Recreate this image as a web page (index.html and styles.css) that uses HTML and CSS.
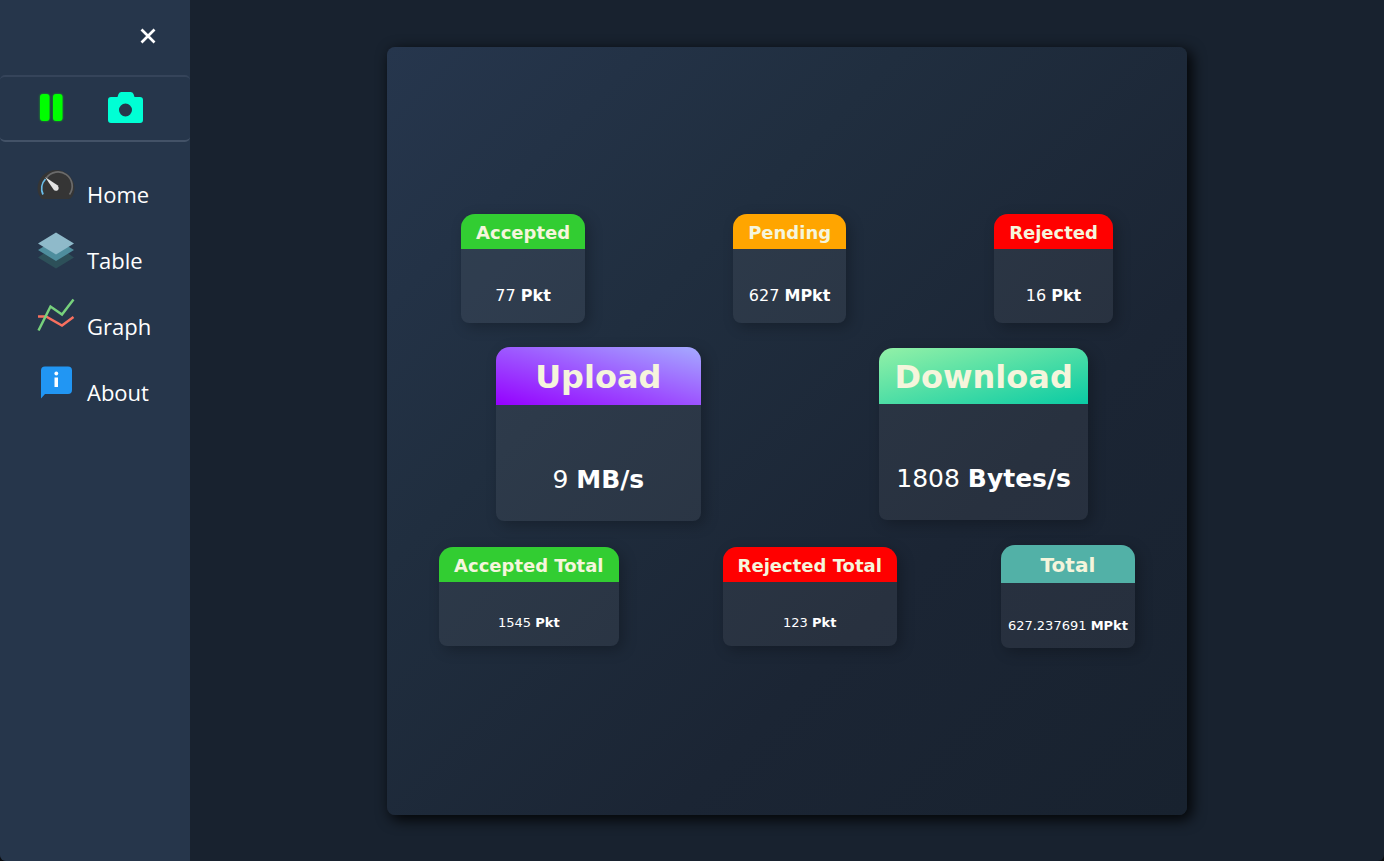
FILE: index.html
```html
<!DOCTYPE html>
<html lang="en">
<head>
<meta charset="utf-8">
<title>Packet Monitor</title>
<link rel="stylesheet" href="styles.css">
</head>
<body>
<div class="app">
  <aside class="sidebar">
    <div class="sidebar-top">
      <button class="close" type="button" aria-label="Close menu">
        <svg width="16" height="16" viewBox="0 0 16 16"><path d="M1.500 1.500 14.500 14.500M14.500 1.500 1.500 14.500" stroke="#fff" stroke-width="2.700"/></svg>
      </button>
    </div>
    <div class="tools">
      <button class="tool" type="button" aria-label="Pause">
        <svg class="glow" width="26" height="30" viewBox="0 0 26 30"><rect x="1" y="1" width="9.500" height="27" rx="3"/><rect x="14" y="1" width="9.500" height="27" rx="3"/></svg>
      </button>
      <button class="tool" type="button" aria-label="Take snapshot">
        <svg width="36" height="32" viewBox="0 0 36 32"><path fill="#00ffd5" fill-rule="evenodd" d="M3 5H9.500L10.500 2Q11.300 0 13.500 0H22.500Q24.700 0 25.500 2L26.500 5H32Q35 5 35 8V28Q35 31 32 31H3Q0 31 0 28V8Q0 5 3 5ZM17.500 11.500A6.500 6.500 0 1 0 17.500 24.500 6.500 6.500 0 0 0 17.500 11.500Z"/></svg>
      </button>
    </div>
    <nav class="nav">
      <a href="#home">
        <svg width="38" height="38" viewBox="0 -3 38 38"><path fill="#353535" d="M5 31C2 28 .5 24.500.5 20.500A18.500 18.500 0 0 1 37.500 20.500C37.500 24.500 36 28 34 30Q33 31 31 31Z"/><path d="M9.500 9.800A14 14 0 0 1 32.500 26.500" fill="none" stroke="#6b6b6b" stroke-width="1.700"/><path d="M8.500 11A14 14 0 0 0 6 26.500" fill="none" stroke="#69bce8" stroke-width="1.800"/><path fill="#e4e4e4" d="M8 9 20.500 17.300Q22.700 20.500 20.800 22.200 18 23.500 16.500 21.500Z"/></svg>
        <span>Home</span>
      </a>
      <a href="#table">
        <svg width="38" height="38" viewBox="0 0 38 38"><path fill="#2d5059" d="M19 14 37 26.500 19 37.500 1 26.500Z"/><path fill="#4e8d9d" d="M19 8 37 19 19 30 1 19Z"/><path fill="#8fbaca" d="M19 1.500 37 12.500 19 23.500 1 12.500Z"/></svg>
        <span>Table</span>
      </a>
      <a href="#graph">
        <svg width="38" height="38" viewBox="0 0 38 38" fill="none" stroke-width="2.500"><path stroke="#f8705f" d="M1 19.500H9L25 28.500 36.500 20"/><path stroke="#77d17c" d="M1.500 33.500 13.500 9.500 25 17.500 36.500 2.500"/></svg>
        <span>Graph</span>
      </a>
      <a href="#about">
        <svg width="38" height="38" viewBox="0 0 38 38"><path fill="#2196f3" d="M8 3.500H31Q35 3.500 35 7.500V27Q35 31 31 31H8L4 35.500V7.500Q4 3.500 8 3.500Z"/><path fill="#fff" d="M17.500 14.500H21V24H17.500Z"/><circle fill="#fff" cx="19.300" cy="10.500" r="1.900"/></svg>
        <span>About</span>
      </a>
    </nav>
  </aside>
  <main class="main">
    <section class="panel">
      <div class="row">
        <article class="card accepted"><h2>Accepted</h2><p>77 <b>Pkt</b></p></article>
        <article class="card pending"><h2>Pending</h2><p>627 <b>MPkt</b></p></article>
        <article class="card rejected"><h2>Rejected</h2><p>16 <b>Pkt</b></p></article>
      </div>
      <div class="row speeds">
        <article class="card upload"><h2>Upload</h2><p>9 <b>MB/s</b></p></article>
        <article class="card download"><h2>Download</h2><p>1808 <b>Bytes/s</b></p></article>
      </div>
      <div class="row totals">
        <article class="card accepted"><h2>Accepted Total</h2><p>1545 <b>Pkt</b></p></article>
        <article class="card rejected"><h2>Rejected Total</h2><p>123 <b>Pkt</b></p></article>
        <article class="card total"><h2>Total</h2><p>627.237691 <b>MPkt</b></p></article>
      </div>
    </section>
  </main>
</div>
</body>
</html>
```
FILE: styles.css
```css
* { box-sizing: border-box; }
body { margin: 0; background: #0b0d10; color: #fff; }
button { padding: 0; border: 0; background: none; cursor: pointer; }
svg { display: block; }

.app {
  display: flex;
  min-height: 100vh;
  background: #18222f;
  border-radius: 0 0 6px 6px;
  overflow: hidden;
}

.sidebar { flex: 0 0 190px; background: #26364b; }
.sidebar-top {
  display: flex;
  justify-content: flex-end;
  align-items: center;
  height: 75px;
  padding: 0 34px 3px 0;
}
.tools {
  display: flex;
  align-items: center;
  gap: 43px;
  height: 67px;
  padding: 0 0 2px 39px;
  border-top: 2px solid #35445a;
  border-bottom: 2px solid #435267;
  border-radius: 5px;
}
.glow { fill: #00ff00; filter: drop-shadow(0 0 1px #00ff0099); }

.nav { display: flex; flex-direction: column; gap: 16px; padding: 20px 0 0 37px; }
.nav a {
  display: flex;
  align-items: flex-start;
  gap: 12px;
  height: 50px;
  padding-top: 3px;
  color: #fff;
  font: 22px/30px "Open Sans", "Noto Sans", sans-serif;
  text-decoration: none;
}
.nav span { padding-top: 14px; }

.main {
  flex: 1;
  display: flex;
  justify-content: center;
  padding: 47px 0 46px;
}
.panel {
  display: flex;
  flex-direction: column;
  justify-content: center;
  gap: 24px;
  width: 67%;
  background: linear-gradient(135deg, #26364d, #202e3f 33%, #1b2534 67%, #18222f);
  border-radius: 8px;
  box-shadow: 4px 4px 14px 1px #000000dd;
  font-family: Verdana, "DejaVu Sans", sans-serif;
}
.row { display: flex; justify-content: space-around; align-items: center; }
.speeds { justify-content: space-between; padding: 0 12.4% 0 13.6%; }

.card {
  background: #ffffff0f;
  border-radius: 14px 14px 8px 8px;
  box-shadow: 4px 4px 14px #00000040;
  overflow: hidden;
  text-align: center;
  white-space: nowrap;
}
.card h2 {
  margin: 0;
  padding: 2px 15px 0;
  color: beige;
  font-size: 18px;
  line-height: 33px;
}
.card p { margin: 0; padding: 37px 7px 17px; font-size: 16px; line-height: 20px; }

.accepted h2 { background: limegreen; }
.pending h2 { background: orange; }
.rejected h2 { background: red; }

.speeds h2 { font-size: 32px; line-height: 54px; }
.speeds p { padding: 59px 16px 25px; font-size: 25px; line-height: 32px; }
.upload { min-width: 205px; }
.speeds .upload h2 { background: linear-gradient(15deg, #9500ff, #a5abff); line-height: 56px; }
.download h2 { background: linear-gradient(165deg, #93f1a7, #0acba4); }

.totals p { padding-bottom: 13px; padding-top: 31px; font-size: 13px; }
.card.total h2 { background: #52b1a7; font-size: 20px; line-height: 36px; }
.totals .total p { padding-top: 33px; padding-bottom: 12px; }
```
